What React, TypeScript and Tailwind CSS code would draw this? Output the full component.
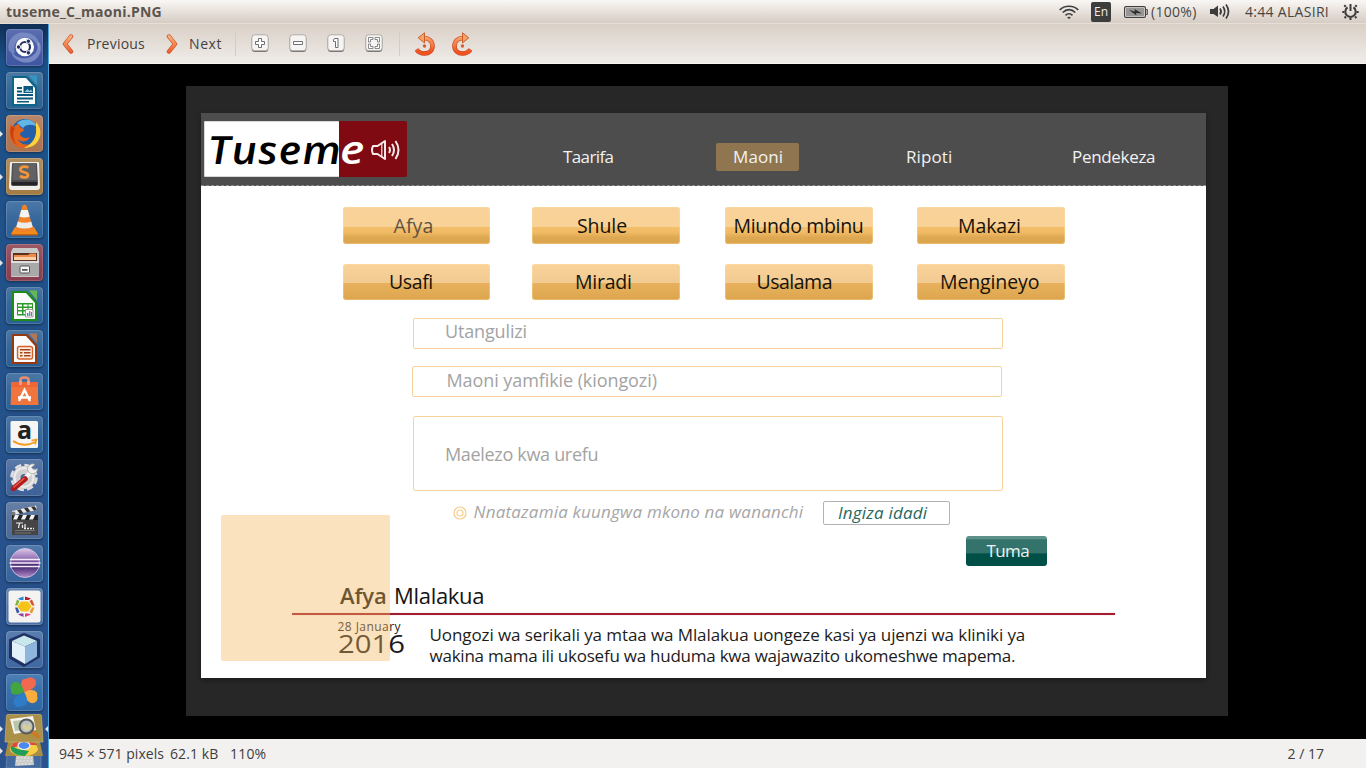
import type { ReactNode } from "react";

type Tile = { name: string; tint: string; running?: boolean; art: ReactNode };

function Doc({ edge, light, children }: { edge: string; light: string; children: ReactNode }) {
  return (
    <>
      <path d="M6 4H21L31 15V34H6Z" fill={edge} />
      <path d="M8 6H20L29 16V32H8Z" fill="#fbfbfb" />
      <path d="M23 3.5H31V13.5Z" fill={light} opacity=".85" />
      {children}
    </>
  );
}

const tiles: Tile[] = [
  {
    name: "Dash",
    tint: "bg-[#3f56a2]",
    art: (
      <>
        <path d="M3 22C0 10 10 1 22 4C31 6 35 13 33 22C32 12 24 7 16 9C9 11 7 18 9 25Z" fill="#8e9dd0" opacity=".6" />
        <path d="M34 14C38 26 28 36 16 33C10 31 6 28 5 22C10 30 20 31 26 27C32 23 32 19 31 13Z" fill="#a5b1dc" opacity=".55" />
        <circle cx="18.8" cy="18" r="9.200" fill="#fff" />
        <circle cx="19" cy="18" r="5" fill="none" stroke="#232f66" strokeWidth="2.2" />
        <g fill="#232f66" stroke="#fff" strokeWidth=".9">
          <circle cx="12.5" cy="18" r="2.2" />
          <circle cx="22.4" cy="12.2" r="2.2" />
          <circle cx="22.4" cy="23.8" r="2.2" />
        </g>
      </>
    ),
  },
  {
    name: "Writer",
    tint: "bg-[#2c6193]",
    art: (
      <Doc edge="#0b6589" light="#2f9fc8">
        <g fill="#0b587c">
          <path d="M11 15h5v2h-5zM11 18.500h5v2h-5zM11 22h16v2H11zM11 25.500h16v2H11zM11 29h12v1.500H11z" />
          <path d="M17.500 14H27v7h-9.500z" />
        </g>
        <path d="M18.500 20l3-3 2 2 1.500-1.500 1.500 2.500z" fill="#8fc6df" />
      </Doc>
    ),
  },
  {
    name: "Firefox",
    tint: "bg-[#ac7350]",
    running: true,
    art: (
      <>
        <circle cx="19" cy="17.500" r="13.500" fill="#245fa8" />
        <path d="M11 8C18 2 28 4 31 12C27 9 20 9 17 13Z" fill="#63b6e8" />
        <path d="M29 6C35 11 36 20 32 26C27 33 17 35 10 31C4 27 2 19 5 9L8 12C10 9 13 9 14 9C13 11 14 13 18 14C18 17 14 17 14 19C15 23 20 24 24 22C21 28 14 27 12 24C14 30 23 32 28 26C31 21 31 13 29 6Z" fill="#e2641c" />
        <path d="M30 7C35 12 36 20 32 26C29 31 23 33 18 33C27 29 31 21 30 13Z" fill="#fcd33c" />
        <path d="M5 11C3 18 5 26 11 30C7 25 6 18 9 13Z" fill="#c93f14" />
      </>
    ),
  },
  {
    name: "Sublime Text",
    tint: "bg-[#a37c45]",
    running: true,
    art: (
      <>
        <path d="M4 5Q4 4 5 4H32Q33 4 33 5L34 29Q34 32 31 32H6Q3 32 3 29Z" fill="#f1efeb" />
        <path d="M6 6Q6 5 7 5H30Q31 5 31 6L32 26Q32 28 30 28H7Q5 28 5 26Z" fill="#4b4b4d" />
        <path d="M7 5H30L30.500 22H6.500Z" fill="#626264" />
        <path d="M6 24H31V27H6Z" fill="#242426" />
        <path d="M22.500 9.500C18 7.500 14 9 14.500 12C15 15 22 13.500 22 17C22 20 17 20 14 18" fill="none" stroke="#f0953d" strokeWidth="2.800" />
      </>
    ),
  },
  {
    name: "VLC",
    tint: "bg-[#2c6097]",
    art: (
      <>
        <path d="M9 26H28L32 33H5Z" fill="#f28a1d" />
        <path d="M5 33h27v1.500H5z" fill="#c8610b" />
        <path d="M16.500 4.500Q18.500 3 20.500 4.500L27.500 29Q18.500 33 9.500 29Z" fill="#f0822a" />
        <path d="M15.200 9H21.800L23.700 15.500Q18.500 17.500 13.300 15.500Z" fill="#f4f4f2" />
        <path d="M11.800 20.500Q18.500 23 25.200 20.500L26.800 26Q18.500 29 10.200 26Z" fill="#ececea" />
      </>
    ),
  },
  {
    name: "Files",
    tint: "bg-[#8a3d4e]",
    running: true,
    art: (
      <>
        <path d="M7 4H31L33 8V32Q33 33 32 33H6Q5 33 5 32V8Z" fill="#c9c9c9" />
        <path d="M7 9H31V17H7Z" fill="#5a3020" />
        <path d="M8 11H22L24 9.500H30V16H8Z" fill="#f08a4a" />
        <path d="M8 13H30V16H8Z" fill="#fbcfa8" />
        <path d="M5 17H33V32H5Z" fill="#a9a9a9" />
        <path d="M5 17H33V19H5Z" fill="#dedede" />
        <rect x="14" y="22" width="9.500" height="7" rx="1" fill="#f5f5f5" stroke="#555" />
        <path d="M16 25h5.500v1.800H16z" fill="#555" />
      </>
    ),
  },
  {
    name: "Calc",
    tint: "bg-[#2a5f95]",
    art: (
      <Doc edge="#1d8a1b" light="#6cc644">
        <path d="M11 16H27V28.500H11Z" fill="#2a9a2a" />
        <path d="M12 17.500h4v2h-4zM17.500 17.500h4v2h-4zM22.500 17.500h3.500v2h-3.500zM12 21h4v2h-4zM17.500 21h4v2h-4zM22.500 21h3.500v2h-3.500zM12 24.500h4v2.500h-4zM17.500 24.500h3v2.500h-3z" fill="#fff" />
        <path d="M19.500 22.500H27V30H19.500Z" fill="#fff" stroke="#888" strokeWidth=".8" />
        <path d="M21 26h1.500v3H21z" fill="#3a8fd8" />
        <path d="M23 24h1.300v5H23z" fill="#e5742c" />
        <path d="M24.800 25h1.200v4h-1.200z" fill="#3a8fd8" />
      </Doc>
    ),
  },
  {
    name: "Impress",
    tint: "bg-[#2a5f95]",
    art: (
      <Doc edge="#953a10" light="#c87848">
        <rect x="11.500" y="16.500" width="15" height="12.500" rx="2" fill="#fbeadb" stroke="#d4622a" strokeWidth="1.400" />
        <path d="M14 19h10.500v1.500H14zM14 22h2.500v1.500H14zM18 22h6.500v1.500H18zM14 25h2.500v1.500H14zM18 25h6.500v1.500H18z" fill="#a8441a" />
      </Doc>
    ),
  },
  {
    name: "Software",
    tint: "bg-[#2c6097]",
    art: (
      <>
        <path d="M14.500 12V6.500Q14.500 4.500 18.500 4.500T22.500 6.500V12" fill="none" stroke="#ee8e70" strokeWidth="2.500" />
        <path d="M5 9H32V22L32.500 32H4.500L5 22Z" fill="#f1743c" />
        <path d="M5 9H32V14H5Z" fill="#ee6636" />
        <path d="M14.500 12V8M22.500 12V8" stroke="#f7a58c" strokeWidth="2.500" />
        <path d="M13 28L18.500 17L24 28M12 24.500H25" fill="none" stroke="#fff" strokeWidth="2.500" />
      </>
    ),
  },
  {
    name: "Amazon",
    tint: "bg-[#2c6097]",
    art: (
      <>
        <rect x="4.500" y="5" width="27.500" height="27" rx="1.500" fill="#f5f5f4" />
        <text x="11" y="23" fontFamily="Open Sans, sans-serif" fontSize="25" fontWeight="700" fill="#222">a</text>
        <path d="M7 25Q18 32 29 26" fill="none" stroke="#f79a1c" strokeWidth="1.800" />
        <path d="M25.500 24.500L30.500 23.500L29 28.500" fill="none" stroke="#f79a1c" strokeWidth="1.600" />
      </>
    ),
  },
  {
    name: "Settings",
    tint: "bg-[#3d6299]",
    art: (
      <>
        <circle cx="18" cy="18.500" r="10.500" fill="none" stroke="#dfdfdf" strokeWidth="6.500" strokeDasharray="5.500 2.750" />
        <circle cx="18" cy="18.500" r="7.500" fill="none" stroke="#d0d0d0" strokeWidth="8" />
        <circle cx="18" cy="18.500" r="9.500" fill="none" stroke="#ececec" strokeWidth="2" />
        <path d="M19 19L27 11" stroke="#f4f4f4" strokeWidth="4" />
        <path d="M29 5.500A5 5 0 1 0 31.500 9.500L28 11L25.500 8.500Z" fill="#eee" stroke="#999" strokeWidth=".7" />
        <path d="M7.500 29.500L19 20" stroke="#b31c1c" strokeWidth="5.500" strokeLinecap="round" />
        <path d="M8 28L18 19.500" stroke="#ea5a50" strokeWidth="1.500" strokeLinecap="round" />
      </>
    ),
  },
  {
    name: "OpenShot",
    tint: "bg-[#4c6a96]",
    art: (
      <>
        <path d="M6 9L30 3.500L31 8L7 13Z" fill="#e8e8e8" />
        <path d="M11 8l3 4 3.500-.8-3-4zM18 6.300l3 4 3.500-.8-3-4zM25 4.700l3 4 3-1-2.500-3.500z" fill="#333" />
        <path d="M6 13H32V33H6Z" fill="#454545" />
        <path d="M6 13H32V18H6Z" fill="#222" />
        <path d="M9 13h4l-2 4.500H7zM17 13h4l-2 4.500h-4zM25 13h4l-2 4.500h-4z" fill="#f2f2f2" />
        <path d="M10 21h7M13.500 21l-1 5M16.500 23v3M19 22v4" stroke="#f2f2f2" strokeWidth="1.200" />
        <path d="M9 28.500h20M9 31h16" stroke="#888" strokeWidth=".7" />
        <path d="M18 26.500h10" stroke="#eee" strokeWidth="1.300" strokeDasharray="2 1" />
        <circle cx="7.500" cy="11.500" r="2" fill="#777" />
      </>
    ),
  },
  {
    name: "Eclipse",
    tint: "bg-[#35639c]",
    art: (
      <>
        <defs>
          <linearGradient id="ecl" x1="0" y1="0" x2="0" y2="1">
            <stop offset="0" stopColor="#dcc8e8" />
            <stop offset=".4" stopColor="#8a63ae" />
            <stop offset=".6" stopColor="#3d1f6a" />
            <stop offset="1" stopColor="#b58fcb" />
          </linearGradient>
        </defs>
        <circle cx="19" cy="18" r="14.500" fill="url(#ecl)" stroke="#d7c6e4" strokeWidth=".8" />
        <path d="M4 14.500H34M3.500 18H34.500M4 21.500H34" stroke="#f3ecf8" strokeWidth="1.300" />
      </>
    ),
  },
  {
    name: "Colors",
    tint: "bg-[#4a70a6]",
    art: (
      <>
        <rect x="2.500" y="2.500" width="32" height="32" rx="2.500" fill="#f4f3f2" />
        <path d="M15 13.500H22L25.500 18.500L22 23.500H15L11.500 18.500Z" fill="#f7c316" />
        <path d="M17.500 8.500V12H14L12 10.500Z" fill="#2f86c8" />
        <path d="M19 8.500L25 10.500L22.500 12H19Z" fill="#b0202f" />
        <path d="M26 11.500L28.500 17.500H26L23.500 13Z" fill="#d4562a" />
        <path d="M28.500 19.500L26 25.500L23.500 24L26 19.500Z" fill="#e79a2a" />
        <path d="M25 26.500L19 29V25.500H22.500Z" fill="#e43d7a" />
        <path d="M12 26.500L17.500 29V25.500H14.500Z" fill="#8a3f9e" />
        <path d="M9 19.500L11 25.500L13.500 24L11.500 19.500Z" fill="#3358a8" />
        <path d="M11 11.500L9 17.500H11.500L13.500 13Z" fill="#7fb441" />
      </>
    ),
  },
  {
    name: "NetBeans",
    tint: "bg-[#3f68a2]",
    art: (
      <>
        <path d="M18 3L33 9V26L18 35L4 27V9Z" fill="#1f3263" stroke="#1f3263" strokeWidth="2" strokeLinejoin="round" />
        <path d="M18 4.500L31 10L19 15.500L6 10Z" fill="#c9e8ee" />
        <path d="M6 10L19 15.500V33L6 25.500Z" fill="#e3f1fa" />
        <path d="M19 15.500L31 10V25.500L19 33Z" fill="#8eb5dc" />
      </>
    ),
  },
  {
    name: "Pinwheel",
    tint: "bg-[#2d68a6]",
    art: (
      <>
        <path d="M18 18C12 8 17 4 20 5C24 2 31 4 30 10C29 15 22 17 18 18Z" fill="#f2694f" />
        <path d="M18 18C27 13 33 18 31 22C33 26 29 30 25 29C20 27 19 22 18 18Z" fill="#f8ac3c" />
        <path d="M18 18C24 27 20 33 16 32C11 35 6 31 8 26C10 22 15 20 18 18Z" fill="#2f7cc8" />
        <path d="M18 18C9 23 4 20 5 16C3 11 7 7 11 8C16 10 17 14 18 18Z" fill="#42a540" />
      </>
    ),
  },
];

function Pip({ on }: { on?: boolean }) {
  return (
    <svg className="h-3 w-[5.5px] shrink-0" viewBox="0 0 5.500 12">
      {on && <path d="M0 3L3 6L0 9Z" fill="#e4e6e8" />}
    </svg>
  );
}

function Launcher() {
  return (
    <aside className="flex w-[49px] shrink-0 flex-col overflow-hidden border-r border-[#4da3da] bg-linear-to-b from-[#0f2f57] from-0% via-[#1c5188] via-5% to-[#2c528e] pt-[5.3px]">
      {tiles.map((t) => (
        <div key={t.name} className="flex h-[43px] shrink-0 items-start">
          <div className="flex h-[37px] items-center">
            <Pip on={t.running} />
          </div>
          <div
            className={`h-[37px] w-[37px] rounded-[4px] bg-linear-to-b from-white/15 via-white/5 to-transparent shadow-[inset_0_0_0_1px_rgba(255,255,255,0.16),0_1px_3px_rgba(0,0,0,0.45)] ${t.tint}`}
          >
            <svg className="size-[37px] overflow-visible" viewBox="0 0 37 37">
              {t.art}
            </svg>
          </div>
        </div>
      ))}
      <svg className="-mt-[3.3px] h-[54px] w-12 shrink-0" viewBox="0 0 48 54">
        <path d="M7 41H41V54H6Z" fill="#436a9f" stroke="#7d96bd" strokeWidth=".6" />
        <path d="M16 42L33 41L34 51L15 52Z" fill="#c9cac8" />
        <path d="M17 44h15M16 47h17M18 50h14" stroke="#eee" strokeWidth="1.200" strokeDasharray="2 1.500" />
        <path d="M8 28H40L43 42H5Z" fill="#a98d45" />
        <path d="M10 36C10 29 16 28 24 28C32 28 38 30 38 36C35 40 30 42 24 42C18 42 12 40 10 36Z" fill="#f7cd45" />
        <path d="M11 34C12 28 17 27 24 27.500C31 28 35 28 37 31H24Z" fill="#dc4a38" />
        <path d="M11 32C9 38 17 42 25 42L29 37L18 35Z" fill="#1e9e58" />
        <ellipse cx="24" cy="31.500" rx="6" ry="4" fill="#4a8af0" stroke="#f1f1f1" strokeWidth="1.200" />
        <path d="M8 .5H40Q41.500 .5 41.500 2L43 28H5L6.500 2Q6.500 .5 8 .5Z" fill="#ab9047" stroke="#c7b276" strokeWidth=".7" />
        <path d="M10 5L33 2L36 16L14 20Z" fill="#f3f2ee" />
        <path d="M13 7L22 6L23 16L15 17Z" fill="#b9c7a8" />
        <path d="M31 17L38 22.500" stroke="#cd7a22" strokeWidth="3.500" strokeLinecap="round" />
        <circle cx="26.500" cy="12.500" r="7" fill="#aeb9ba" fillOpacity=".85" stroke="#595c60" strokeWidth="2" />
        <path d="M22 13L24 9L27 12L30 9L31 15L26 17Z" fill="#d6cf9a" />
        <path d="M0 12L3 15L0 18ZM0 34L3 37L0 40ZM48 12L45 15L48 18Z" fill="#e4e6e8" />
      </svg>
    </aside>
  );
}

function TopBar() {
  return (
    <header className="flex h-6 shrink-0 items-center border-b border-[#e6ded7] bg-linear-to-b from-[#f9f7f5] to-[#d6ccc3] pr-[7px] pl-[6px] text-[14px] text-[#4a4641]">
      <span className="text-[14px] font-bold tracking-[0.24px] text-[#5b554e]">tuseme_C_maoni.PNG</span>
      <div className="ml-auto flex items-center">
        <svg className="h-4 w-5" viewBox="0 0 20 16" fill="none" stroke="#3f3f3f" strokeWidth="1.700">
          <path d="M.7 6C5.500 1 14.500 1 19.300 6" />
          <path d="M3.700 8.500C7.500 4.700 12.500 4.700 16.300 8.500" />
          <path d="M6.500 11.300C8.500 9.200 11.500 9.200 13.500 11.300" />
          <path d="M8 13.500Q10 12 12 13.500L10 15Z" fill="#3f3f3f" stroke="none" />
        </svg>
        <span className="ml-3 flex size-5 items-center justify-center rounded-[2px] bg-[#3d3d3d] text-[12px] leading-5 text-[#f0ece8]">
          En
        </span>
        <svg className="ml-[13px] h-3 w-6" viewBox="0 0 24 12">
          <rect x=".6" y=".6" width="20.800" height="10.800" rx="1.500" fill="#f1eeea" stroke="#3f3f3f" strokeWidth="1.200" />
          <rect x="2" y="2" width="18" height="8" fill="#999795" />
          <path d="M22 3.500h1.500v5H22z" fill="#f1eeea" stroke="#3f3f3f" strokeWidth=".8" />
          <path d="M5 4L11 5.500L10.500 3L18 7.500L12 7L12.500 9.500Z" fill="#2f2f2f" />
        </svg>
        <span className="ml-[3px] w-[47px] tracking-[0.3px]">(100%)</span>
        <svg className="ml-3 h-[17px] w-5" viewBox="0 0 20 17" fill="none" stroke="#3c3c3c" strokeWidth="1.700">
          <path d="M0 6h3.500L8 2.500V14L3.500 11H0Z" fill="#3c3c3c" stroke="none" />
          <path d="M10 5.500Q12.200 8.500 10 11.500" />
          <path d="M13 3.500Q16.500 8.500 13 13.500" />
          <path d="M16 1.500Q21 8.500 16 15.500" />
        </svg>
        <span className="ml-[15px] w-[86px] tracking-[0.3px]">4:44 ALASIRI</span>
        <svg className="ml-[11px] size-[17px]" viewBox="0 0 17 17" fill="none" stroke="#3c3c3c" strokeWidth="2">
          <path d="M5.600 4.400A5.200 5.200 0 1 0 11.400 4.400" />
          <path d="M8.500 1V8" />
          <path d="M3.800 3.800L2.300 2.300M13.200 3.800L14.700 2.300M2.500 9H.3M16.700 9H14.500M4 13.500L2.500 15M13 13.500L14.500 15M8.500 14.500V17" />
        </svg>
      </div>
    </header>
  );
}

function ZoomKey({ className, children }: { className: string; children: ReactNode }) {
  return (
    <svg className={`h-[19px] w-[18px] shrink-0 ${className}`} viewBox="0 0 18 19">
      <rect x=".8" y="1.500" width="16.400" height="16.500" rx="3" fill="#77736f" />
      <rect x=".8" y=".8" width="16.400" height="15.900" rx="3" fill="#f6f5f4" stroke="#a29e99" strokeWidth=".8" />
      <g fill="#fff" stroke="#6f6f6f" strokeWidth="1">
        {children}
      </g>
    </svg>
  );
}

function Turn({ flip }: { flip?: boolean }) {
  return (
    <svg className="h-6 w-5 shrink-0" viewBox="0 0 20 24">
      <g transform={flip ? "translate(20 0) scale(-1 1)" : undefined}>
        <path d="M8 6C14 5.500 17.500 9.500 17.500 14C17.500 18.500 14 21.500 9.500 21.500C6 21.500 3.500 20.500 1.500 17.500" fill="none" stroke="#c9441a" strokeWidth="4.600" />
        <path d="M8 6C14 5.500 17.500 9.500 17.500 14C17.500 18.500 14 21.500 9.500 21.500C6 21.500 3.500 20.500 1.500 17.500" fill="none" stroke="url(#warm)" strokeWidth="3.400" />
        <path d="M9.500 .8V11L3.200 5.800Z" fill="#f6a466" stroke="#c9561f" strokeWidth=".9" />
        <circle cx="9.500" cy="14" r="1.700" fill="#e0592a" />
      </g>
    </svg>
  );
}

function Toolbar() {
  return (
    <div className="flex h-10 shrink-0 items-center border-b border-[#f7f5f3] bg-linear-to-b from-[#dad0c7] to-[#efece8] pl-[13px] text-[14px] text-[#45423f]">
      <svg className="h-5 w-3" viewBox="0 0 12 20" fill="none" strokeLinecap="round" strokeLinejoin="round">
        <defs>
          <linearGradient id="warm" gradientUnits="userSpaceOnUse" x1="0" y1="2" x2="0" y2="20">
            <stop offset="0" stopColor="#f9b27a" />
            <stop offset="1" stopColor="#ee5421" />
          </linearGradient>
        </defs>
        <path d="M9 2.500L3 10L9 17.500" stroke="#c4502a" strokeWidth="4.400" />
        <path d="M9 2.500L3 10L9 17.500" stroke="url(#warm)" strokeWidth="3" />
      </svg>
      <span className="ml-[13px] w-[79px] tracking-[0.22px]">Previous</span>
      <svg className="h-5 w-3" viewBox="0 0 12 20" fill="none" strokeLinecap="round" strokeLinejoin="round">
        <path d="M3 2.500L9 10L3 17.500" stroke="#c4502a" strokeWidth="4.400" />
        <path d="M3 2.500L9 10L3 17.500" stroke="url(#warm)" strokeWidth="3" />
      </svg>
      <span className="ml-[11px] w-[46px] tracking-[0.6px]">Next</span>
      <span className="h-6 w-px bg-[#d5ccc4]" />
      <ZoomKey className="ml-[15px]">
        <path d="M7.500 4.500h3v3h3v3h-3v3h-3v-3h-3v-3h3z" />
      </ZoomKey>
      <ZoomKey className="ml-5">
        <path d="M4.500 7.500h9v3h-9z" />
      </ZoomKey>
      <ZoomKey className="ml-5">
        <path d="M8 4.500h3v9H8.500V7.500H6.500V5.500Z" />
      </ZoomKey>
      <ZoomKey className="ml-5">
        <path d="M3.500 3.500H8v2H5.500V8h-2zM14.500 3.500H10v2h2.500V8h2zM3.500 14.500H8v-2H5.500V10h-2zM14.500 14.500H10v-2h2.500V10h2z" strokeWidth=".8" />
      </ZoomKey>
      <span className="ml-4 h-6 w-px bg-[#d5ccc4]" />
      <div className="ml-[15px] flex gap-[17px]">
        <Turn />
        <Turn flip />
      </div>
    </div>
  );
}

function Logo() {
  return (
    <div className="mt-2 ml-[3px] flex h-14 w-[203px] shrink-0 items-start overflow-hidden rounded-[2px] leading-none italic">
      <div className="h-14 w-[135px] border border-r-0 border-[#d8d8d8] bg-white pt-[6px] pl-[3px] text-black">
        <span className="block w-[120px] origin-left scale-x-[1.12] -skew-x-[-4deg] text-[39px] leading-[42px] font-semibold tracking-[0.6px]">
          Tusem
        </span>
      </div>
      <div className="flex h-14 w-[68px] bg-[#800a12]">
        <span className="w-[31px] pt-[7px] pl-px text-white">
          <span className="block w-6 origin-left scale-x-[1.18] text-[39px] leading-[42px] font-semibold">e</span>
        </span>
        <svg className="mt-[18px] h-[22px] w-8" viewBox="0 0 32 22" fill="none" stroke="#f6e9e9" strokeWidth="2">
          <path d="M3 7H7.500L15 2V20L7.500 15H3Q1 11 3 7Z" strokeLinejoin="round" />
          <path d="M11.800 4V18" strokeWidth="1.200" />
          <path d="M19 8Q21 11 19 14M22 5Q26 11 22 17M25.500 2Q31.500 11 25.500 20" />
        </svg>
      </div>
    </div>
  );
}

const glossA = "bg-[linear-gradient(to_bottom,#f8d298_0%,#f8d297_53%,#f3bf6c_54%,#f2bb65_68%,#dea853_82%,#dba44d_100%)]";
const glossB = "bg-[linear-gradient(to_bottom,#f9d399_0%,#f0ca90_53%,#e6b05c_54%,#e3ac57_75%,#dca44c_100%)]";

const topics = [
  { label: "Afya", pad: "pl-[51px]", track: "tracking-[0.1px]", tone: "text-[#5d5243]", bg: glossA },
  { label: "Shule", pad: "pl-[45px]", track: "tracking-[-0.1px]", tone: "text-[#17120a]", bg: glossA },
  { label: "Miundo mbinu", pad: "pl-[8.5px]", track: "tracking-[-0.33px]", tone: "text-[#17120a]", bg: glossA },
  { label: "Makazi", pad: "pl-[41px]", track: "tracking-[-0.1px]", tone: "text-[#17120a]", bg: glossA },
  { label: "Usafi", pad: "pl-[46.5px]", track: "tracking-[-0.4px]", tone: "text-[#17120a]", bg: glossB },
  { label: "Miradi", pad: "pl-[43px]", track: "tracking-[-0.25px]", tone: "text-[#17120a]", bg: glossB },
  { label: "Usalama", pad: "pl-[31.5px]", track: "tracking-[-0.5px]", tone: "text-[#17120a]", bg: glossB },
  { label: "Mengineyo", pad: "pl-[23px]", track: "tracking-[-0.12px]", tone: "text-[#17120a]", bg: glossB },
];

function Site() {
  return (
    <div className="flex h-[565px] w-[1005px] flex-col bg-white shadow-[0_2px_5px_rgba(0,0,0,0.35)]">
      <div className="flex h-[72.5px] shrink-0 border-b border-dashed border-[#8a8a8a] bg-[#4d4d4d] font-[Open_Sans,sans-serif] text-[17px] text-[#f2f2f2]">
        <Logo />
        <nav className="mt-[30px] flex h-7 items-center leading-7">
          <span className="ml-[156px] w-[153px] tracking-[-0.6px]">Taarifa</span>
          <span className="h-7 w-[83px] rounded-[2px] bg-[#8f7650] pl-[17px] leading-[27px] tracking-[0.1px]">Maoni</span>
          <span className="ml-[107px] w-[166px] tracking-[0.1px]">Ripoti</span>
          <span className="-mt-px tracking-[-0.32px]">Pendekeza</span>
        </nav>
      </div>

      <div className="mt-[21.5px] ml-[141.5px] grid w-[722px] shrink-0 grid-cols-[189.5px_193px_192px_147px] gap-y-5">
        {topics.map((t) => (
          <button
            key={t.label}
            className={`h-[36.5px] w-[147.5px] rounded-[3px] text-left text-[19.5px] leading-[35px] whitespace-nowrap shadow-[inset_0_0_0_1px_rgba(255,225,170,0.35)] ${t.bg} ${t.pad} ${t.track} ${t.tone}`}
          >
            {t.label}
          </button>
        ))}
      </div>

      <div className="mt-[17.5px] ml-[212px] flex shrink-0 flex-col text-[18px] text-[#a3a3a3]">
        <div className="flex h-[31px] w-[590px] items-center rounded-[2px] border border-[#f6d39d] pb-[3px] pl-[31px] tracking-[-0.15px]">
          Utangulizi
        </div>
        <div className="mt-[17px] -ml-px flex h-[31px] w-[590px] items-center rounded-[2px] border border-[#f6d39d] pb-[2px] pl-[33.5px] tracking-[-0.08px]">
          Maoni yamfikie (kiongozi)
        </div>
        <div className="mt-[19px] flex h-[75px] w-[590px] items-center rounded-[2px] border border-[#f6d39d] pt-[2px] pl-[31px] tracking-[-0.32px]">
          Maelezo kwa urefu
        </div>
      </div>

      <div className="mt-[10px] ml-[252px] flex h-6 shrink-0 items-center text-[17px] italic">
        <svg className="size-[14px]" viewBox="0 0 14 14" fill="none" stroke="#f8cd90" strokeWidth="1.200">
          <circle cx="7" cy="7" r="6" />
          <circle cx="7" cy="7" r="3" />
        </svg>
        <span className="mb-px ml-[6.5px] w-[349.5px] tracking-[0.2px] whitespace-nowrap text-[#a6a6a6]">
          Nnatazamia kuungwa mkono na wananchi
        </span>
        <span className="h-6 w-[127px] rounded-[2px] border border-[#b3b3b3] pl-[14px] leading-[21px] tracking-[0.2px] text-[#276860]">
          Ingiza idadi
        </span>
      </div>

      <button className="mt-[11px] ml-[765px] h-[30px] w-[81px] shrink-0 rounded-[3px] bg-[linear-gradient(to_bottom,#5d9089_0%,#5d9089_9%,#34736b_13%,#34736b_57%,#005048_59%,#004f47_100%)] pl-[20.5px] text-left text-[17px] leading-[28px] tracking-[-0.6px] text-[#edf3f2]">
        Tuma
      </button>

      <div className="relative mt-[15px] flex shrink-0 flex-col">
        <h2 className="ml-[139px] flex h-7 text-[22px] leading-7 text-[#141414]">
          <span className="w-[54px] font-semibold tracking-[-0.1px]">Afya</span>
          <span className="tracking-[-0.3px]">Mlalakua</span>
        </h2>
        <div className="mt-[4px] ml-[91px] h-[2px] w-[823px] bg-[#a31c30] shadow-[0_0_1px_#c98a94]" />
        <div className="flex pt-[4.5px] text-[#1c1c1c]">
          <div className="flex w-[228.5px] flex-col pl-[136.5px]">
            <span className="h-[15px] text-[12px] leading-[15px] tracking-[0.45px] whitespace-nowrap">28 January</span>
            <span className="h-[18px] w-[57px] origin-left scale-x-[1.17] text-[25px] leading-[18px]">2016</span>
          </div>
          <p className="pt-[4.5px] text-[17px] leading-[21.500px] whitespace-nowrap">
            <span className="block tracking-[-0.09px]">
              Uongozi wa serikali ya mtaa wa Mlalakua uongeze kasi ya ujenzi wa kliniki ya
            </span>
            <span className="block tracking-[-0.24px]">
              wakina mama ili ukosefu wa huduma kwa wajawazito ukomeshwe mapema.
            </span>
          </p>
        </div>
        <div className="absolute -top-[66px] left-5 h-[146px] w-[169px] rounded-[2px] bg-[rgba(245,182,95,0.4)]" />
      </div>
    </div>
  );
}

export default function App() {
  return (
    <div className="flex h-[768px] w-[1366px] flex-col overflow-hidden bg-black font-[Open_Sans,sans-serif]">
      <TopBar />
      <div className="flex min-h-0 flex-1">
        <Launcher />
        <div className="flex min-w-0 flex-1 flex-col">
          <Toolbar />
          <main className="flex min-h-0 flex-1 bg-black pt-[22px] pl-[137px]">
            <div className="h-[630px] w-[1042px] bg-[#272727] pt-[27px] pl-[15px]">
              <Site />
            </div>
          </main>
          <footer className="flex h-[29px] shrink-0 items-center bg-[#f2f1f0] pr-[42px] pl-[10px] text-[14px] text-[#3f3d3b]">
            <span className="w-[111px] tracking-[0.03px]">945 × 571 pixels</span>
            <span className="w-[60px] tracking-[0.1px]">62.1 kB</span>
            <span className="tracking-[0.2px]">110%</span>
            <span className="ml-auto">2 / 17</span>
          </footer>
        </div>
      </div>
    </div>
  );
}
